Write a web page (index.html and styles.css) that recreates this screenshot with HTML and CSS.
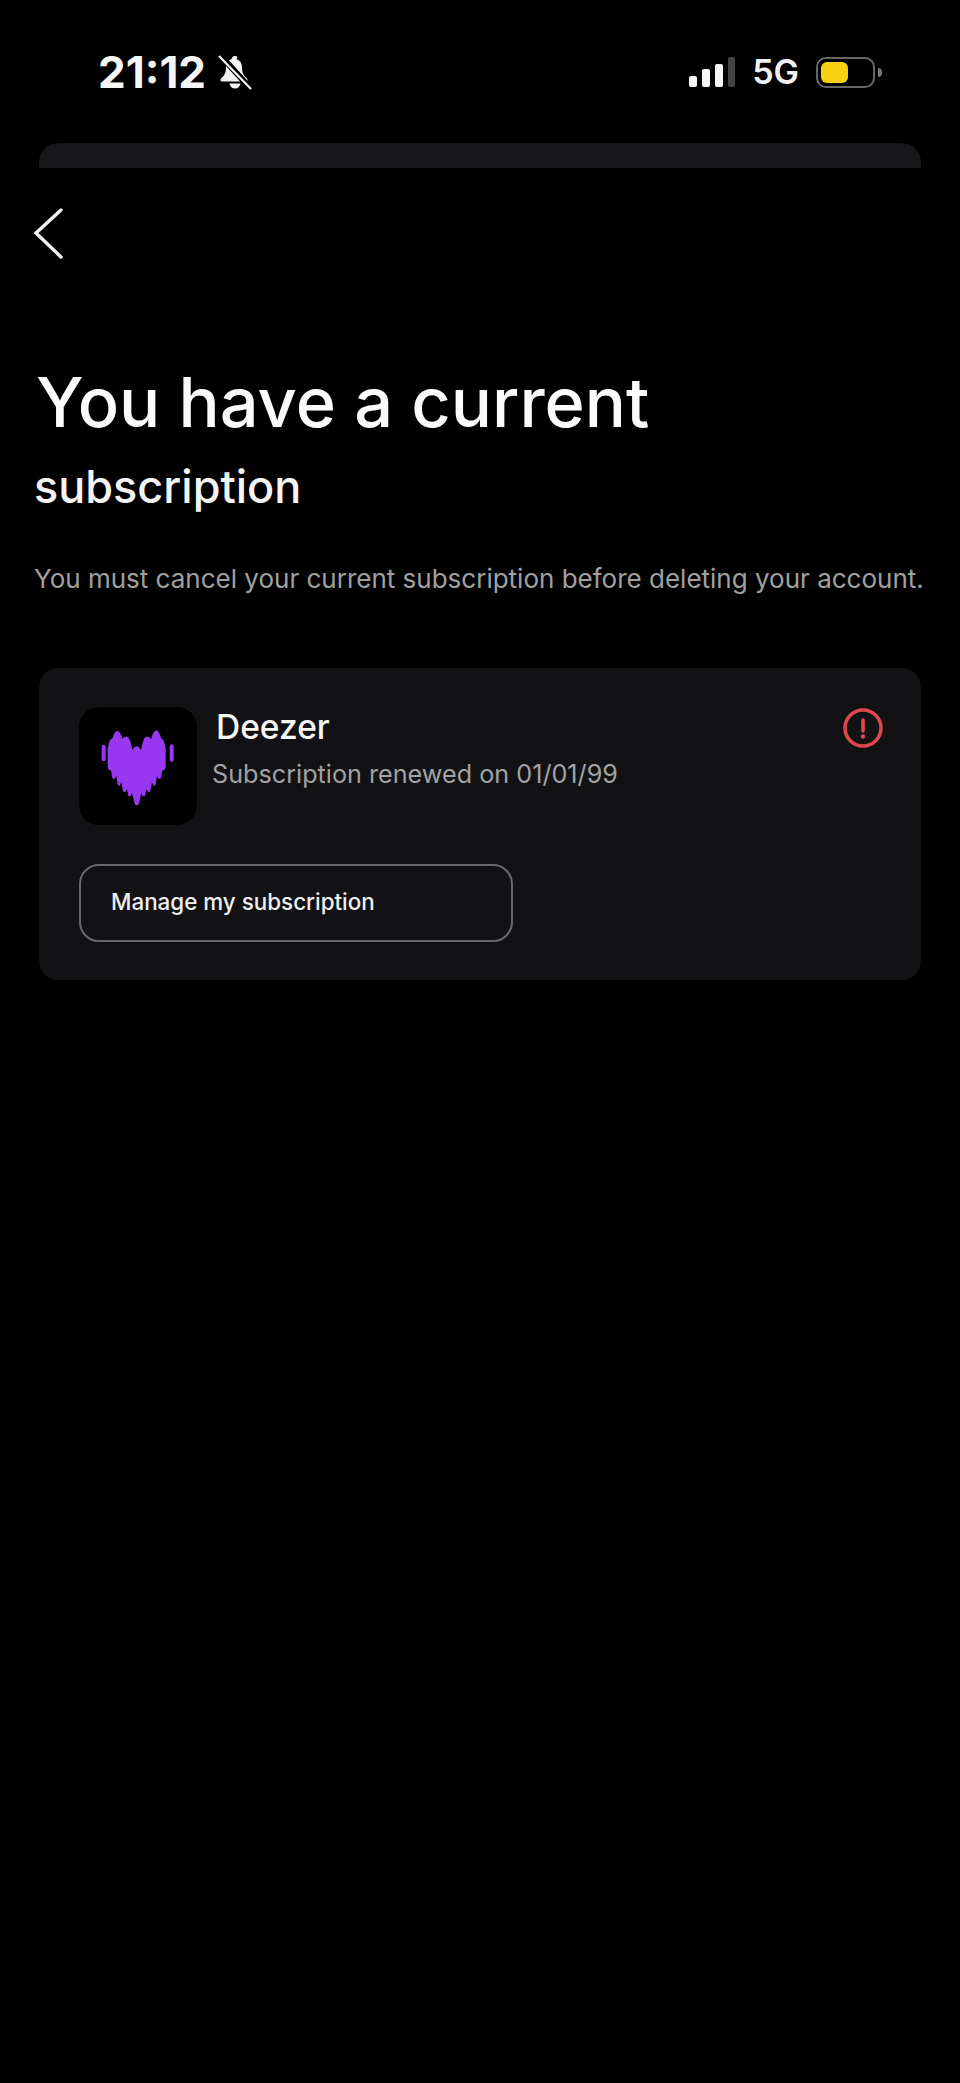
FILE: index.html
```html
<!DOCTYPE html>
<html>
  <head>
    <title>Subscription</title>
    <link rel="stylesheet" href="styles.css">
  </head>
  <body>
    <div class="status-bar">
      <div class="status-left">
        <span class="time">21:12</span>
        <svg class="bell" width="36" height="36" viewBox="0 0 36 36">
          <path d="M18 2c-2 0-3 1-3.400 3-4 1.500-5.600 4.500-5.600 8.500 0 5-1.500 8-5 11-1 1-.5 3 1 3h24c1.600 0 2-2 1-3-3.500-3-5-6-5-11 0-4-1.600-7-5.600-8.500C21 3 20 2 18 2z" fill="#f4f4f4"/>
          <path d="M12.500 29.500h11c-.5 3-2.700 5-5.500 5s-5-2-5.500-5z" fill="#f4f4f4"/>
          <path d="M3 1l31 34" stroke="#000" stroke-width="6"/>
          <path d="M2 2l32 33" stroke="#f4f4f4" stroke-width="2.200"/>
        </svg>
      </div>
      <div class="status-right">
        <div class="signal">
          <span class="bar bar-1"></span>
          <span class="bar bar-2"></span>
          <span class="bar bar-3"></span>
          <span class="bar bar-4"></span>
        </div>
        <span class="network">5G</span>
        <div class="battery"><div class="battery-fill"></div></div>
        <span class="battery-nub"></span>
      </div>
    </div>

    <div class="sheet-edge"></div>

    <div class="back">
      <svg width="32" height="54" viewBox="0 0 32 54">
        <path d="M28 3L3 26l25 24" fill="none" stroke="#f2f2f2" stroke-width="3.400" stroke-linecap="round" stroke-linejoin="miter"/>
      </svg>
    </div>

    <h1 class="title">You have a current</h1>
    <h2 class="subtitle">subscription</h2>
    <p class="message">You must cancel your current subscription before deleting your account.</p>

    <div class="card">
      <div class="card-top">
        <div class="app-icon">
          <svg width="118" height="118" viewBox="0 0 354 354">
            <g fill="#9838f2">
              <rect x="68" y="113" width="12" height="50" rx="6"/>
              <path d="M86 125Q92 92 100 95Q107 70 115 72Q124 72 130 96Q138 86 146 90Q154 94 160 130Q166 118 173 118Q180 118 186 130Q192 94 200 90Q208 86 216 96Q224 70 233 70Q240 72 247 95Q254 92 260 125L260 180Q258 192 250 190L246 212Q240 222 234 206L230 232Q225 244 219 226L214 252Q208 262 202 246L198 266Q192 274 187 258L180 290Q174 300 167 290L159 258Q154 274 148 266L144 246Q138 262 132 252L127 226Q121 244 116 232L112 206Q106 222 100 212L96 190Q88 192 86 180Z"/>
              <rect x="272" y="112" width="12" height="52" rx="6"/>
            </g>
          </svg>
        </div>
        <div class="app-info">
          <div class="app-name">Deezer</div>
          <div class="app-renewal">Subscription renewed on 01/01/99</div>
        </div>
        <svg class="alert" width="42" height="42" viewBox="0 0 42 42">
          <circle cx="21" cy="21" r="18" fill="none" stroke="#e0474c" stroke-width="3.500"/>
          <path d="M21 13v11" stroke="#e0474c" stroke-width="3.600" stroke-linecap="round"/>
          <circle cx="21" cy="29.500" r="2.200" fill="#e0474c"/>
        </svg>
      </div>
      <div class="manage-btn">Manage my subscription</div>
    </div>
  </body>
</html>
```

FILE: styles.css
```css
html, body {
  margin: 0;
  padding: 0;
  background-color: #000;
}
body {
  height: 2083px;
  overflow: hidden;
  font-family: Inter, "Liberation Sans", sans-serif;
  color: #fff;
}
.status-bar {
  display: flex;
  justify-content: space-between;
  align-items: center;
  height: 36px;
  padding: 54px 78px 0 98px;
}
.status-left {
  display: flex;
  align-items: center;
  gap: 11px;
}
.time {
  font-size: 44px;
  font-weight: 700;
  line-height: 36px;
  color: #f6f6f6;
}
.status-right {
  display: flex;
  align-items: center;
}
.signal {
  display: flex;
  align-items: flex-end;
  gap: 5px;
  height: 30px;
  margin-right: 17px;
}
.bar {
  width: 8px;
  background-color: #f6f6f6;
  border-radius: 2px;
}
.bar-1 { height: 11px; }
.bar-2 { height: 18px; }
.bar-3 { height: 23px; }
.bar-4 { height: 30px; width: 7px; background-color: #444; }
.network {
  font-size: 34px;
  font-weight: 600;
  line-height: 36px;
  color: #f0f0f0;
  margin-right: 17px;
}
.battery {
  box-sizing: border-box;
  width: 59px;
  height: 31px;
  border: 2px solid #6a6668;
  border-radius: 10px;
  padding: 3px;
}
.battery-fill {
  width: 27px;
  height: 21px;
  background-color: #f8d210;
  border-radius: 6px;
}
.battery-nub {
  width: 4px;
  height: 9px;
  margin-left: 3px;
  background-color: #777;
  border-radius: 0 4px 4px 0;
}
.sheet-edge {
  height: 25px;
  margin: 53px 39px 0;
  background-color: #18181a;
  border-radius: 20px 20px 0 0;
}
.back {
  height: 54px;
  margin-top: 39px;
  padding-left: 33px;
}
.title {
  margin: 102px 0 0 36px;
  font-size: 68.500px;
  font-weight: 500;
  line-height: 80px;
  color: #fbfbfb;
}
.subtitle {
  margin: 18px 0 0 34px;
  font-size: 45px;
  font-weight: 500;
  line-height: 52px;
  color: #f4f4f4;
}
.message {
  margin: 48px 0 0 34px;
  font-size: 26px;
  line-height: 36px;
  white-space: nowrap;
  color: #a0a0a0;
}
.card {
  box-sizing: border-box;
  width: 882px;
  height: 312px;
  margin: 71px 0 0 39px;
  padding: 39px 40px;
  background-color: #121215;
  border-radius: 20px;
}
.card-top {
  display: flex;
  align-items: flex-start;
}
.app-icon {
  width: 118px;
  height: 118px;
  background-color: #000;
  border-radius: 20px;
}
.app-info {
  flex: 1;
  margin-left: 15px;
}
.app-name {
  margin: 0 0 0 4px;
  font-size: 33.500px;
  font-weight: 500;
  line-height: 40px;
  color: #f6f6f6;
}
.app-renewal {
  margin-top: 10px;
  font-size: 25.200px;
  line-height: 34px;
  color: #a2a2a2;
}
.alert {
  margin: 0 -3px 0 0;
}
.manage-btn {
  box-sizing: border-box;
  width: 434px;
  height: 78px;
  margin-top: 39px;
  padding-left: 30px;
  border: 2px solid #68686c;
  border-radius: 20px;
  font-size: 22.400px;
  font-weight: 500;
  line-height: 72px;
  color: #efeff0;
}
```
